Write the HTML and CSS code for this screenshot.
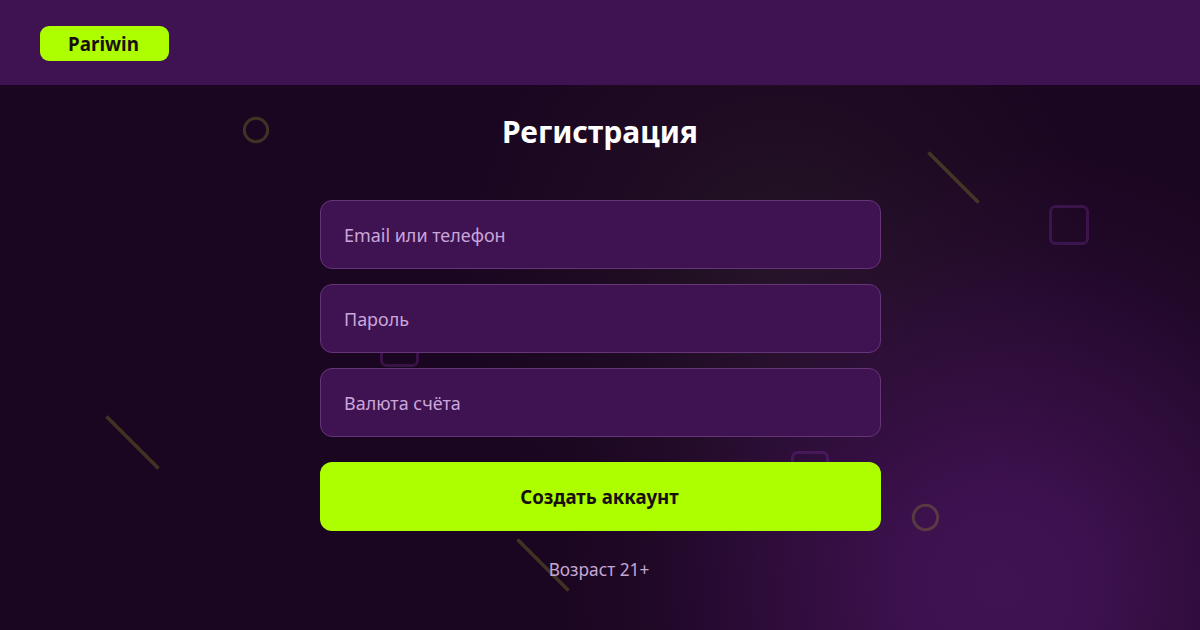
FILE: index.html
```html
<!DOCTYPE html>
<html lang="ru">
<head>
<meta charset="utf-8">
<title>Pariwin</title>
<link rel="stylesheet" href="styles.css">
</head>
<body>
<div class="page">
  <header class="header"><a class="logo">Pariwin</a></header>
  <main class="main">
    <svg class="decor" width="1200" height="545" viewBox="0 85 1200 545" fill="none" stroke-width="3" aria-hidden="true">
      <g class="decor-lime">
        <circle cx="256" cy="130" r="11.7"/>
        <circle cx="925.5" cy="517.5" r="12.2"/>
        <path stroke-width="3.6" d="M928.5 152.500L978.500 202.500M106.500 416.500L158.500 468.500M517.500 539.500L568.500 590.500"/>
      </g>
      <g class="decor-violet">
        <rect x="1050.500" y="206.500" width="37" height="37" rx="5"/>
        <rect x="381.500" y="328.500" width="36" height="37" rx="5"/>
        <rect x="792.500" y="452.500" width="35" height="36" rx="5"/>
      </g>
    </svg>
    <h1 class="title">Регистрация</h1>
    <form class="form">
      <div class="field">Email или телефон</div>
      <div class="field">Пароль</div>
      <div class="field">Валюта счёта</div>
      <button class="submit" type="button">Создать аккаунт</button>
    </form>
    <p class="age">Возраст 21+</p>
  </main>
</div>
</body>
</html>
```
FILE: styles.css
```css
* { box-sizing: border-box; }
body { margin: 0; font-family: "Noto Sans", "Open Sans", sans-serif; }
.page {
  width: 1200px;
  height: 630px;
  overflow: hidden;
  display: flex;
  flex-direction: column;
}
.header {
  height: 85px;
  padding: 26px 40px 0;
  background: #3f1251;
}
.logo {
  display: flex;
  align-items: center;
  justify-content: center;
  width: 129px;
  height: 35px;
  padding-right: 2px;
  border-radius: 9px;
  background: #adff00;
  color: #1a0f10;
  font-size: 18.8px;
  font-weight: 700;
}
.main {
  position: relative;
  flex: 1;
  display: flex;
  flex-direction: column;
  align-items: center;
  background:
    radial-gradient(circle at 1000px 500px, #3f1251 0, rgba(63, 18, 81, .95) 90px, rgba(63, 18, 81, .52) 230px, rgba(63, 18, 81, .16) 340px, rgba(63, 18, 81, 0) 440px),
    radial-gradient(circle at 780px 180px, #241426 0, rgba(34, 16, 36, .5) 170px, rgba(28, 6, 34, 0) 320px),
    #1b0621;
}
.decor { position: absolute; left: 0; top: 0; }
.decor-lime { stroke: #a1a02c; stroke-opacity: .29; }
.decor-violet { stroke: #7b2fa0; stroke-opacity: .31; }
.title, .form, .age { position: relative; }
.title {
  margin: 25px 0 0;
  color: #fff;
  font-size: 30px;
  line-height: 44px;
  font-weight: 700;
  white-space: nowrap;
}
.form {
  width: 561px;
  margin: 46px 0 0 1px;
  display: flex;
  flex-direction: column;
  gap: 15px;
}
.field {
  height: 69px;
  padding: 0 23px;
  display: flex;
  align-items: center;
  border: 1px solid #663578;
  border-radius: 12px;
  background: #3f1251;
  color: #cba6da;
  font-size: 17.95px;
}
.submit {
  height: 69px;
  margin: 10px 0 0;
  padding: 0 2px 0 0;
  border: 0;
  border-radius: 12px;
  background: #adff00;
  color: #1a0f10;
  font: inherit;
  font-size: 18.7px;
  font-weight: 700;
}
.age {
  margin: 27px 0 0;
  padding-right: 2px;
  color: #c4a6d2;
  font-size: 17.3px;
  line-height: 24px;
}
```
